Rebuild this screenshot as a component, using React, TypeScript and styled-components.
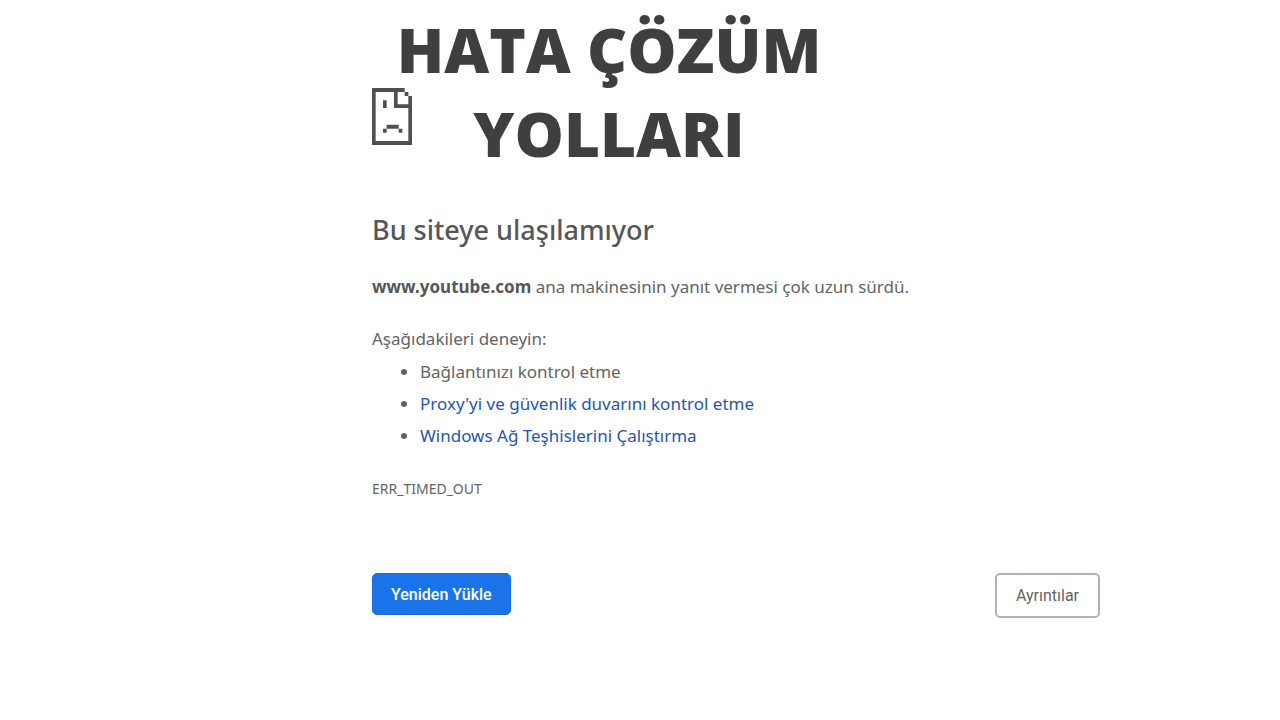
import React from "react";
import styled, { createGlobalStyle } from "styled-components";

const GlobalStyle = createGlobalStyle`
  * {
    box-sizing: border-box;
  }
  body {
    margin: 0;
    background: #ffffff;
    color: #646464;
    font-family: "Noto Sans", "Open Sans", sans-serif;
    font-size: 17px;
    line-height: 32px;
  }
`;

const Page = styled.main`
  padding: 7px 180px 32px 372px;
`;

const Header = styled.header`
  display: grid;
  max-width: 474px;
`;

const Banner = styled.h1`
  grid-area: 1 / 1;
  margin: 0;
  color: #403e3f;
  font-family: "Open Sans", sans-serif;
  font-size: 62px;
  font-weight: 800;
  line-height: 84px;
  text-align: center;
`;

const SadPage = styled.svg`
  grid-area: 1 / 1;
  width: 40px;
  height: 57px;
  margin-top: 81px;
  fill: #505050;
`;

const Title = styled.h2`
  margin: 33px 0 0;
  color: #55575b;
  font-size: 27px;
  font-weight: 500;
  line-height: 43px;
`;

const Paragraph = styled.p`
  margin: 20px 0 0;
`;

const Host = styled.strong`
  color: #55575b;
  font-weight: 700;
`;

const Tips = styled.ul`
  margin: 1px 0 0;
  padding-left: 48px;
`;

const Tip = styled.li``;

const TipLink = styled.a`
  color: #2455b8;
  text-decoration: none;
`;

const ErrorCode = styled.p`
  margin: 21px 0 0;
  font-size: 14px;
`;

const Actions = styled.div`
  display: flex;
  align-items: flex-start;
  justify-content: space-between;
  margin-top: 68px;
`;

const Button = styled.button<{ $primary?: boolean }>`
  height: ${(p) => (p.$primary ? 42 : 45)}px;
  padding: 0 ${(p) => (p.$primary ? 18 : 19)}px;
  border: ${(p) => (p.$primary ? "1px solid #1a6be0" : "2px solid #b0b2b6")};
  border-radius: 5px;
  background: ${(p) => (p.$primary ? "#1a73e8" : "#ffffff")};
  color: ${(p) => (p.$primary ? "#ffffff" : "#646464")};
  font-family: Roboto, "Liberation Sans", sans-serif;
  font-size: 16px;
  font-weight: ${(p) => (p.$primary ? 500 : 400)};
`;

export default function App() {
  return (
    <>
      <GlobalStyle />
      <Page lang="tr">
        <Header>
          <Banner>
            HATA ÇÖZÜM
            <br />
            YOLLARI
          </Banner>
          <SadPage viewBox="0 0 120 171" preserveAspectRatio="none" aria-hidden="true">
            <path d="M0 0H98V12H77V49H109V24H120V171H0ZM11 12V159H109V60H66V12Z" fillRule="evenodd" />
            <path d="M98 12H109V24H98ZM33 37H44V60H33ZM44 110H80V122H44ZM33 122H44V134H33ZM80 122H91V134H80Z" />
          </SadPage>
        </Header>
        <Title>Bu siteye ulaşılamıyor</Title>
        <Paragraph>
          <Host>www.youtube.com</Host> ana makinesinin yanıt vermesi çok uzun sürdü.
        </Paragraph>
        <Paragraph>Aşağıdakileri deneyin:</Paragraph>
        <Tips>
          <Tip>Bağlantınızı kontrol etme</Tip>
          <Tip>
            <TipLink href="#proxy">Proxy'yi ve güvenlik duvarını kontrol etme</TipLink>
          </Tip>
          <Tip>
            <TipLink href="#diagnostics">Windows Ağ Teşhislerini Çalıştırma</TipLink>
          </Tip>
        </Tips>
        <ErrorCode>ERR_TIMED_OUT</ErrorCode>
        <Actions>
          <Button type="button" $primary>
            Yeniden Yükle
          </Button>
          <Button type="button">Ayrıntılar</Button>
        </Actions>
      </Page>
    </>
  );
}
